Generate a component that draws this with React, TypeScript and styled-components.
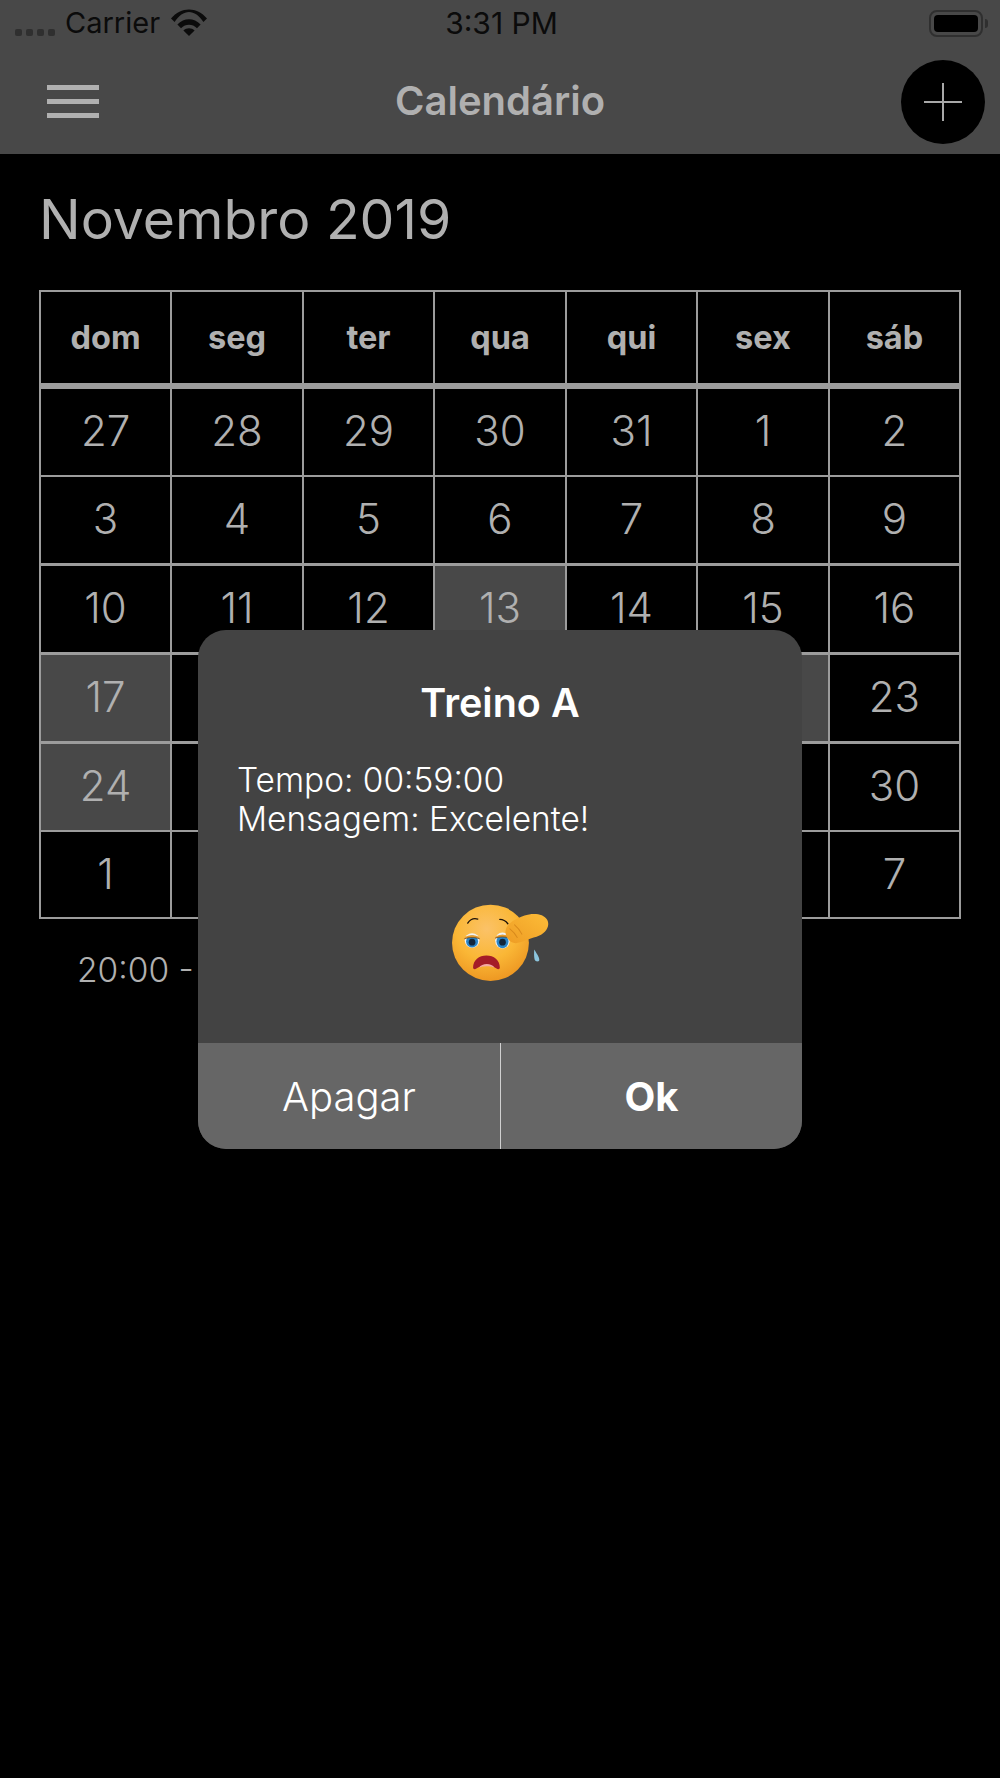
import React from 'react'
import styled, { createGlobalStyle } from 'styled-components'

const GlobalStyle = createGlobalStyle`
  html, body {
    margin: 0;
    padding: 0;
    background: #000;
  }
  * {
    box-sizing: border-box;
  }
`

const WEEK_DAYS = ['dom', 'seg', 'ter', 'qua', 'qui', 'sex', 'sáb']

const DAYS = [
  27, 28, 29, 30, 31, 1, 2,
  3, 4, 5, 6, 7, 8, 9,
  10, 11, 12, 13, 14, 15, 16,
  17, 18, 19, 20, 21, 22, 23,
  24, 25, 26, 27, 28, 29, 30,
  1, 2, 3, 4, 5, 6, 7,
]

// positions in DAYS with a training logged
const MARKED = [17, 21, 26, 28]

const Emoji = () => (
  <svg width="107" height="87" viewBox="200 120 320 260">
    <defs>
      <radialGradient id="face" cx="45%" cy="32%" r="72%">
        <stop offset="0%" stopColor="#fbc268" />
        <stop offset="55%" stopColor="#fab736" />
        <stop offset="100%" stopColor="#ec9420" />
      </radialGradient>
      <linearGradient id="hand" x1="0" y1="1" x2="1" y2="0">
        <stop offset="0%" stopColor="#ee9c24" />
        <stop offset="100%" stopColor="#fcbc38" />
      </linearGradient>
    </defs>
    <ellipse cx="330" cy="248" rx="115" ry="114" fill="url(#face)" />
    <path d="M262 189c8-12 20-15 30-12" fill="none" stroke="#1c1208" strokeWidth="4" strokeLinecap="round" />
    <path d="M358 178c10 0 18 5 24 13" fill="none" stroke="#1c1208" strokeWidth="4" strokeLinecap="round" />
    <ellipse cx="275" cy="241" rx="22" ry="22" fill="#eef2f6" />
    <ellipse cx="366" cy="241" rx="22" ry="24" fill="#eef2f6" />
    <ellipse cx="275" cy="244" rx="18" ry="18" fill="#2a86c8" />
    <ellipse cx="366" cy="244" rx="18" ry="20" fill="#2a86c8" />
    <circle cx="275" cy="246" r="10" fill="#10253c" />
    <circle cx="366" cy="246" r="10" fill="#10253c" />
    <path d="M252 236c2-14 44-14 46 0c-14-5-32-5-46 0z" fill="#e59a2a" />
    <path d="M344 234c2-14 42-14 44 0c-14-5-30-5-44 0z" fill="#e59a2a" />
    <path d="M252 236c14-5 32-5 46 0M344 234c14-5 30-5 44 0" fill="none" stroke="#5a3410" strokeWidth="2" />
    <path d="M278 322c0-22 18-36 40-36s40 14 40 36c0 6-6 6-10 3c-16-12-44-12-60 0c-4 3-10 3-10-3z" fill="#a41c28" />
    <path d="M296 322c8-14 38-14 46 0c-14-5-32-5-46 0z" fill="#f4aaa6" />
    <path d="M376 208c4-18 28-32 56-42c22-7 56-8 68 14c10 20-8 42-32 50c-24 6-46 18-62 19c-18 1-36-22-30-41z" fill="url(#hand)" />
    <path d="M388 206c10 8 16 14 22 26M402 194c10 8 16 16 22 28" fill="none" stroke="#d98a1c" strokeWidth="3" strokeLinecap="round" />
    <path d="M461 268c6 10 16 24 15 32c-1 5-12 5-14-2c-2-8-2-20-1-30z" fill="#8cc4dc" />
  </svg>
)

const App: React.FC = () => {
  return (
    <Page>
      <GlobalStyle />
      <Header>
        <StatusBar>
          <StatusLeft>
            <Signal>
              <i />
              <i />
              <i />
              <i />
            </Signal>
            <Carrier>Carrier</Carrier>
            <svg width="36" height="27" viewBox="0 0 36 27">
              <path d="M0 9.5C10-2.5 26-2.5 36 9.5l-3.6 3.6C24-.5 12-.5 3.6 13.1z" fill="#0b0b0b" />
              <path d="M6.4 15.6c6.6-7.2 16.6-7.2 23.2 0L26 19.2c-4.6-4.6-11.4-4.6-16 0z" fill="#0b0b0b" />
              <path d="M12.4 21.4c3.2-3 8-3 11.2 0L18 27z" fill="#0b0b0b" />
            </svg>
          </StatusLeft>
          <span>3:31 PM</span>
          <StatusRight>
            <Battery>
              <BatteryFill />
            </Battery>
            <BatteryTip />
          </StatusRight>
        </StatusBar>
        <NavBar>
          <MenuButton>
            <i />
            <i />
            <i />
          </MenuButton>
          <NavTitle>Calendário</NavTitle>
          <AddButton>
            <svg width="38" height="38" viewBox="0 0 38 38">
              <path d="M19 0v38M0 19h38" stroke="#a8a8a8" strokeWidth="2" />
            </svg>
          </AddButton>
        </NavBar>
      </Header>

      <Content>
        <MonthTitle>Novembro 2019</MonthTitle>
        <Calendar>
          {WEEK_DAYS.map((day) => (
            <HeadCell key={day}>{day}</HeadCell>
          ))}
          {DAYS.map((day, idx) => (
            <DayCell key={idx} $marked={MARKED.includes(idx)}>
              {day}
            </DayCell>
          ))}
        </Calendar>
        <EventLine>20:00 - Treino A</EventLine>
      </Content>

      <Modal>
        <ModalTitle>Treino A</ModalTitle>
        <ModalText>
          Tempo: 00:59:00
          <br />
          Mensagem: Excelente!
        </ModalText>
        <EmojiWrap>
          <Emoji />
        </EmojiWrap>
        <ModalActions>
          <ModalButton>Apagar</ModalButton>
          <ModalButton $bold>Ok</ModalButton>
        </ModalActions>
      </Modal>
    </Page>
  )
}

const Page = styled.div`
  position: relative;
  width: 1000px;
  height: 1778px;
  overflow: hidden;
  background: #000;
  font-family: Inter, 'Liberation Sans', sans-serif;
`

const Header = styled.header`
  height: 154px;
  background: #484848;
`

const StatusBar = styled.div`
  display: grid;
  grid-template-columns: 1fr auto 1fr;
  align-items: center;
  height: 46px;
  padding: 0 12px 0 15px;
  color: #0b0b0b;
  font-size: 30px;
  line-height: 46px;
`

const StatusLeft = styled.div`
  display: flex;
  align-items: center;
  gap: 11px;

  svg {
    margin-top: -2px;
  }
`

const Carrier = styled.span`
  font-size: 29px;
`

const Signal = styled.div`
  display: flex;
  gap: 4px;
  margin-top: 18px;
  margin-right: -1px;

  i {
    width: 7px;
    height: 7px;
    border-radius: 2px;
    background: #2f2f2f;
  }
`

const StatusRight = styled.div`
  display: flex;
  align-items: center;
  justify-content: flex-end;
  gap: 2px;
`

const Battery = styled.div`
  width: 54px;
  height: 27px;
  padding: 3px;
  border: 2px solid #2f2f2f;
  border-radius: 8px;
`

const BatteryFill = styled.div`
  width: 100%;
  height: 100%;
  border-radius: 4px;
  background: #000;
`

const BatteryTip = styled.div`
  width: 3px;
  height: 9px;
  border-radius: 0 3px 3px 0;
  background: #2f2f2f;
`

const NavBar = styled.nav`
  display: grid;
  grid-template-columns: 1fr auto 1fr;
  align-items: center;
  height: 108px;
  padding: 0 15px;
`

const MenuButton = styled.div`
  display: flex;
  flex-direction: column;
  gap: 9px;
  width: 52px;
  margin: 2px 0 0 32px;

  i {
    height: 5px;
    background: #b0b0b0;
  }
`

const NavTitle = styled.h1`
  margin: 0;
  color: #b0b0b0;
  font-size: 40px;
  font-weight: 600;
`

const AddButton = styled.div`
  display: flex;
  align-items: center;
  justify-content: center;
  justify-self: end;
  width: 84px;
  height: 84px;
  margin-top: 4px;
  border-radius: 50%;
  background: #000;
`

const Content = styled.main`
  padding: 0 39px;
`

const MonthTitle = styled.h2`
  margin: 0;
  padding-top: 32px;
  height: 136px;
  color: #b0b0b0;
  font-size: 55.3px;
  font-weight: 430;
  line-height: 66px;
`

const Calendar = styled.div`
  display: grid;
  grid-template-columns: repeat(7, 1fr);
  grid-template-rows: 93.75px repeat(5, 86px) 85px;
  gap: 2.75px 2.4px;
  padding: 2px;
  background: #9c9c9c;
`

const HeadCell = styled.div`
  display: flex;
  align-items: center;
  justify-content: center;
  height: 91px;
  background: #000;
  color: #b0b0b0;
  font-size: 32.5px;
  font-weight: 700;
`

const DayCell = styled.div<{ $marked?: boolean }>`
  display: flex;
  align-items: center;
  justify-content: center;
  padding-bottom: 3px;
  background: ${(p) => (p.$marked ? '#484848' : '#000')};
  color: #b0b0b0;
  font-size: 42px;
  font-weight: 350;
`

const EventLine = styled.div`
  margin: 31px 0 0 38px;
  color: #b0b0b0;
  font-size: 33.5px;
  font-weight: 350;
`

const Modal = styled.div`
  position: absolute;
  top: 630px;
  left: 198px;
  display: flex;
  flex-direction: column;
  width: 604px;
  height: 519px;
  overflow: hidden;
  border-radius: 28px;
  background: #434343;
  color: #fff;
`

const ModalTitle = styled.div`
  margin-top: 49px;
  font-size: 39.5px;
  font-weight: 600;
  line-height: 48px;
  text-align: center;
`

const ModalText = styled.div`
  margin-top: 34px;
  padding: 0 39px;
  font-size: 33.4px;
  font-weight: 350;
  line-height: 39px;
`

const EmojiWrap = styled.div`
  display: flex;
  justify-content: center;
  margin-top: 61px;
`

const ModalActions = styled.div`
  display: grid;
  grid-template-columns: 1fr 1fr;
  margin-top: auto;
  height: 106px;
  background: #666;
`

const ModalButton = styled.div<{ $bold?: boolean }>`
  display: flex;
  align-items: center;
  justify-content: center;
  font-size: 40px;
  font-weight: ${(p) => (p.$bold ? 700 : 350)};

  & + & {
    border-left: 1px solid #d0d0d0;
  }
`

export default App
